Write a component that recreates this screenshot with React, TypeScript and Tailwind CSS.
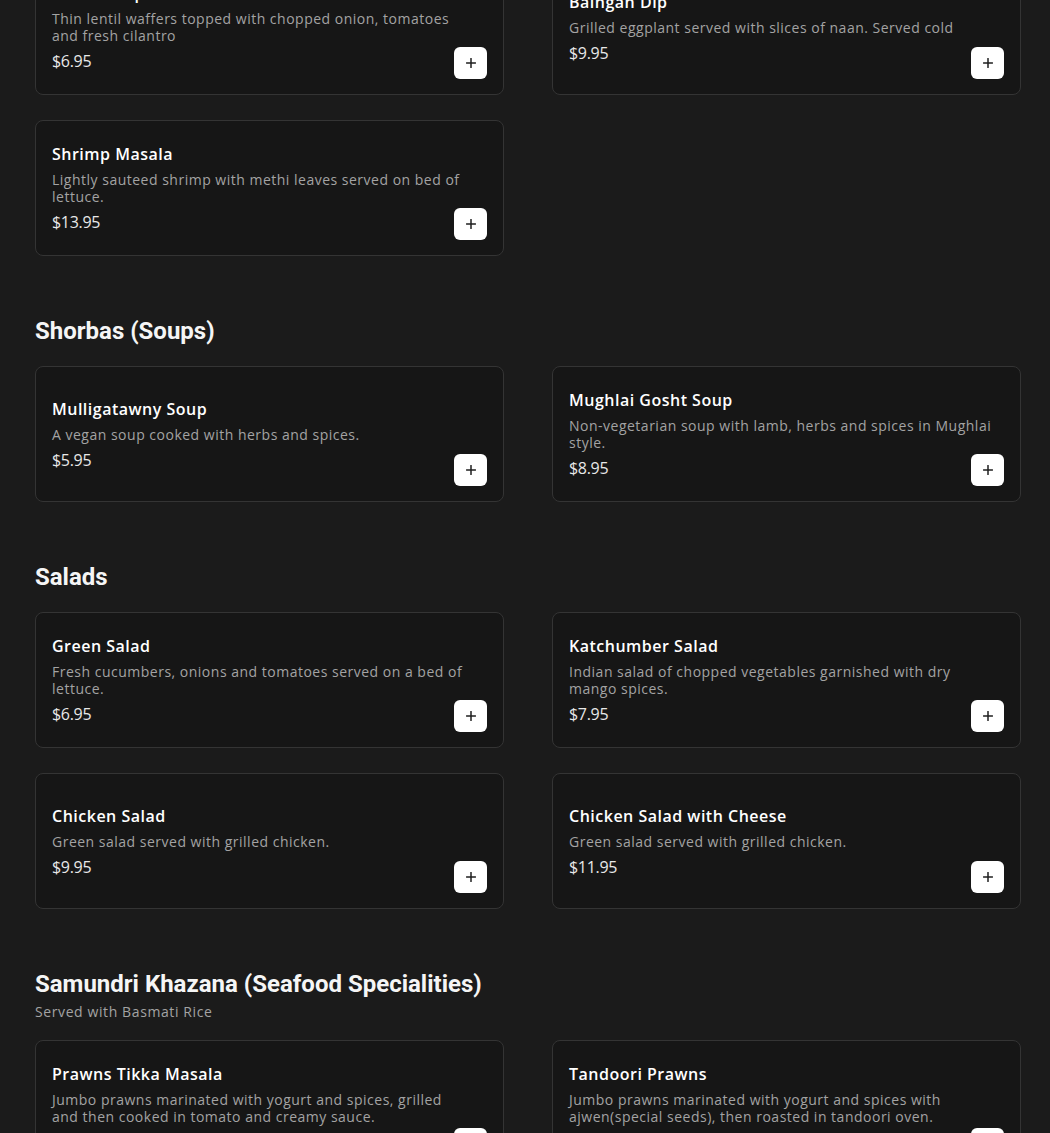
import React from "react";

type Item = {
  name: string;
  desc: string[];
  price: string;
};

type Section = {
  title?: string;
  subtitle?: string;
  items: Item[];
};

const sections: Section[] = [
  {
    items: [
      {
        name: "Masala Papad",
        desc: ["Thin lentil waffers topped with chopped onion, tomatoes", "and fresh cilantro"],
        price: "$6.95",
      },
      {
        name: "Baingan Dip",
        desc: ["Grilled eggplant served with slices of naan. Served cold"],
        price: "$9.95",
      },
      {
        name: "Shrimp Masala",
        desc: ["Lightly sauteed shrimp with methi leaves served on bed of", "lettuce."],
        price: "$13.95",
      },
    ],
  },
  {
    title: "Shorbas (Soups)",
    items: [
      {
        name: "Mulligatawny Soup",
        desc: ["A vegan soup cooked with herbs and spices."],
        price: "$5.95",
      },
      {
        name: "Mughlai Gosht Soup",
        desc: ["Non-vegetarian soup with lamb, herbs and spices in Mughlai", "style."],
        price: "$8.95",
      },
    ],
  },
  {
    title: "Salads",
    items: [
      {
        name: "Green Salad",
        desc: ["Fresh cucumbers, onions and tomatoes served on a bed of", "lettuce."],
        price: "$6.95",
      },
      {
        name: "Katchumber Salad",
        desc: ["Indian salad of chopped vegetables garnished with dry", "mango spices."],
        price: "$7.95",
      },
      {
        name: "Chicken Salad",
        desc: ["Green salad served with grilled chicken."],
        price: "$9.95",
      },
      {
        name: "Chicken Salad with Cheese",
        desc: ["Green salad served with grilled chicken."],
        price: "$11.95",
      },
    ],
  },
  {
    title: "Samundri Khazana (Seafood Specialities)",
    subtitle: "Served with Basmati Rice",
    items: [
      {
        name: "Prawns Tikka Masala",
        desc: ["Jumbo prawns marinated with yogurt and spices, grilled", "and then cooked in tomato and creamy sauce."],
        price: "$17.95",
      },
      {
        name: "Tandoori Prawns",
        desc: ["Jumbo prawns marinated with yogurt and spices with", "ajwen(special seeds), then roasted in tandoori oven."],
        price: "$18.95",
      },
    ],
  },
];

const PlusIcon = () => (
  <svg width="10" height="10" viewBox="0 0 10 10" fill="none">
    <path d="M5 0.5V9.5M0.5 5H9.5" stroke="#1f1f1f" strokeWidth="1.5" strokeLinecap="round" />
  </svg>
);

const MenuCard: React.FC<{ item: Item }> = ({ item }) => (
  <div className="h-[136px] rounded-lg border border-[#343434] bg-[#161616] flex px-[16px]">
    <div className="flex-1 min-w-0 self-center font-['Open_Sans',sans-serif]">
      <h3 className="text-[16px] leading-[24px] font-semibold tracking-[0.5px] text-white mb-[5px] whitespace-nowrap">
        {item.name}
      </h3>
      <p className="text-[14px] leading-[17px] tracking-[0.5px] text-[#a3a3a3] mb-[5px]">
        {item.desc.map((line, i) => (
          <span key={i} className="block whitespace-nowrap">
            {line}
          </span>
        ))}
      </p>
      <div className="text-[16px] leading-[24px] tracking-[-0.3px] text-[#e8e8e8]">{item.price}</div>
    </div>
    <button
      type="button"
      className="self-end mb-[15px] w-[33px] h-[32px] rounded-md bg-white flex items-center justify-center shrink-0"
    >
      <PlusIcon />
    </button>
  </div>
);

export default function App() {
  return (
    <div className="min-h-screen bg-[#1b1b1b] overflow-hidden">
      <div className="mt-[-41px] ml-[35px] w-[986px] flex flex-col">
        {sections.map((section, si) => (
          <section key={si} className={si > 0 ? "mt-[59px]" : ""}>
            {section.title && (
              <h2 className="font-['Roboto',sans-serif] font-bold text-[24px] leading-[32px] text-[#f5f5f5]">
                {section.title}
              </h2>
            )}
            {section.subtitle && (
              <p className="mt-[2px] font-['Open_Sans',sans-serif] text-[14px] leading-[20px] tracking-[0.6px] text-[#a3a3a3]">
                {section.subtitle}
              </p>
            )}
            <div
              className={
                "grid grid-cols-2 gap-x-[48px] gap-y-[25px] " +
                (section.subtitle ? "mt-[18px]" : section.title ? "mt-[19px]" : "")
              }
            >
              {section.items.map((item) => (
                <MenuCard key={item.name} item={item} />
              ))}
            </div>
          </section>
        ))}
      </div>
    </div>
  );
}
